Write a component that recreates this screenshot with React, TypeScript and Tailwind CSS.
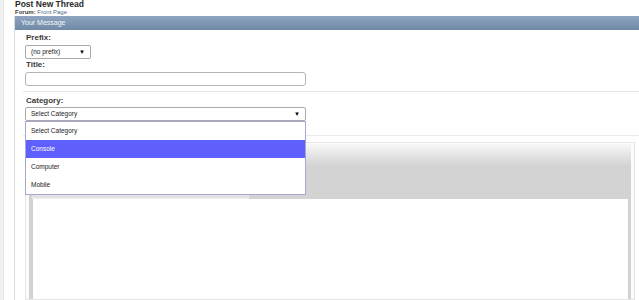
import React from 'react';

const categories = ['Select Category', 'Console', 'Computer', 'Mobile'];

function Arrow() {
  return <span className="text-[6px] leading-none text-black">▼</span>;
}

export default function App() {
  return (
    <div className="w-[639px] h-[300px] overflow-hidden bg-white flex font-['Liberation_Sans',Arial,sans-serif]">
      <div className="w-[4px] shrink-0 bg-[#f1f1f1] border-r border-[#e9e9e9]" />
      <div className="flex-1 flex flex-col pl-[10px]">
        <div className="h-[16px] shrink-0 pl-[1px]">
          <h1 className="text-[8.5px] font-bold leading-[9px] text-[#2a2a2a]">Post New Thread</h1>
          <div className="text-[6px] leading-[6px] text-[#3b3b3b]">
            <span className="font-bold">Forum:</span> <span className="text-[#4d6a8c]">Front Page</span>
          </div>
        </div>

        <div className="flex-1 flex flex-col border-l border-[#d5e0e6]">
          <div className="h-[14px] shrink-0 bg-[linear-gradient(#8fa5bf,#7089a6)] text-[7px] leading-[14px] text-[#f3f6fa] pl-[6px]">
            Your Message
          </div>

          <div className="flex-1 flex flex-col pl-[10px]">
            <div className="pt-[3px] text-[8px] font-bold leading-[10px] text-[#3a3a3a] pl-[1px]">Prefix:</div>
            <div className="mt-[2px] w-[66px] h-[14px] border border-[#a9a9a9] rounded-[2px] flex items-center justify-between px-[5px] text-[6.5px] text-[#222]">
              <span>(no prefix)</span>
              <Arrow />
            </div>
            <div className="mt-[1px] text-[8px] font-bold leading-[10px] text-[#3a3a3a] pl-[1px]">Title:</div>
            <div className="mt-[2px] w-[281px] h-[14px] border border-[#b5b5b5] rounded-[3px]" />

            <div className="mt-[5px] -ml-[2px] border-t border-[#e6e6e6]" />

            <div className="mt-[4px] text-[8px] font-bold leading-[10px] text-[#3a3a3a] pl-[1px]">Category:</div>
            <div className="relative mt-[1px] w-[281px]">
              <div className="h-[14px] border border-[#a9a9a9] rounded-[2px] flex items-center justify-between px-[5px] text-[6.5px] text-[#222]">
                <span>Select Category</span>
                <Arrow />
              </div>
              <ul className="absolute left-0 top-[14px] w-[281px] z-10 bg-white border border-[#aaa6d2] text-[6.5px] text-[#222]">
                {categories.map((c, i) => (
                  <li
                    key={c}
                    className={
                      i === 1
                        ? 'h-[18px] leading-[18px] pl-[5px] bg-[#5f5ffb] text-white'
                        : 'h-[18px] leading-[18px] pl-[5px]'
                    }
                  >
                    {c}
                  </li>
                ))}
              </ul>
            </div>

            <div className="mt-[14px] -ml-[2px] border-t border-[#ebebeb]" />

            <div className="mt-[6px] mr-[4px] flex-1 border border-[#e6e6e6] pt-[1px] pl-[3px] pr-[3px] bg-[#fcfcfc]">
              <div className="h-full flex flex-col bg-[linear-gradient(#f7f7f7,#d3d3d3_22px)]">
                <div className="h-[50px] shrink-0" />
                <div className="h-[5px] shrink-0 flex pl-[3px]">
                  <div className="w-[217px] bg-[#e4e4e4] border-b border-[#f0f0f0]" />
                </div>
                <div className="flex-1 ml-[3px] mr-[2px] bg-white border-l border-r border-[#d0d0d0]" />
              </div>
            </div>
          </div>
        </div>
      </div>
    </div>
  );
}
